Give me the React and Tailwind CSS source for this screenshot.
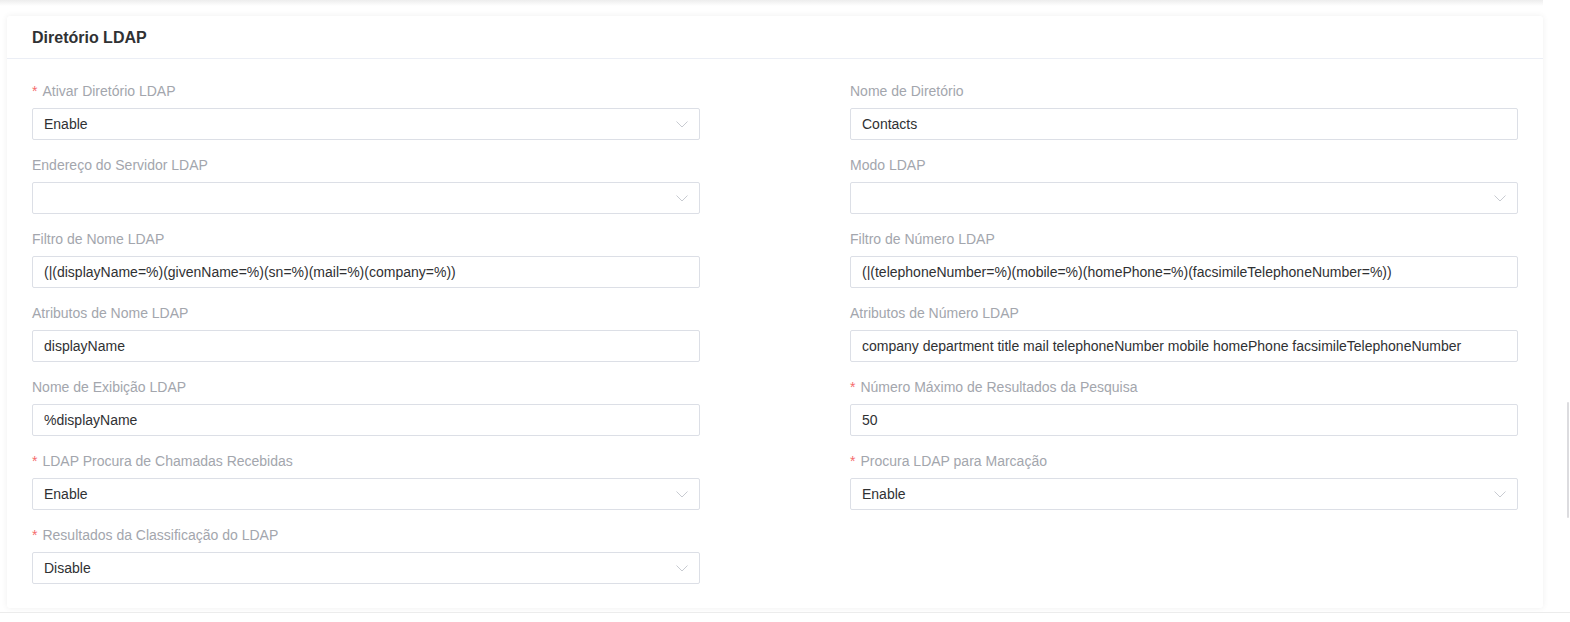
import React from "react";

const Chevron = () => (
  <svg width="12" height="7" viewBox="0 0 12 7" fill="none" className="shrink-0">
    <path d="M0.5 0.5 L6 6 L11.5 0.5" stroke="#c8cbd1" strokeWidth="1" />
  </svg>
);

const Field = ({ label, required, value, select }) => (
  <div className="flex flex-col">
    <div className="h-[20px] leading-[20px] text-[14px] text-[#a3a6ad] flex items-center">
      {required && <span className="text-[#f56c6c] mr-[5px] text-[14px]">*</span>}
      <span>{label}</span>
    </div>
    <div className="mt-[7px] h-[32px] border border-[#dcdfe6] rounded-[2px] bg-white flex items-center pl-[11px] pr-[11px]">
      <span className="flex-1 text-[14px] text-[#303133] whitespace-nowrap overflow-hidden">{value}</span>
      {select && <Chevron />}
    </div>
  </div>
);

export default function App() {
  const left = [
    { label: "Ativar Diretório LDAP", required: true, value: "Enable", select: true },
    { label: "Endereço do Servidor LDAP", value: "", select: true },
    { label: "Filtro de Nome LDAP", value: "(|(displayName=%)(givenName=%)(sn=%)(mail=%)(company=%))" },
    { label: "Atributos de Nome LDAP", value: "displayName" },
    { label: "Nome de Exibição LDAP", value: "%displayName" },
    { label: "LDAP Procura de Chamadas Recebidas", required: true, value: "Enable", select: true },
    { label: "Resultados da Classificação do LDAP", required: true, value: "Disable", select: true },
  ];
  const right = [
    { label: "Nome de Diretório", value: "Contacts" },
    { label: "Modo LDAP", value: "", select: true },
    { label: "Filtro de Número LDAP", value: "(|(telephoneNumber=%)(mobile=%)(homePhone=%)(facsimileTelephoneNumber=%))" },
    { label: "Atributos de Número LDAP", value: "company department title mail telephoneNumber mobile homePhone facsimileTelephoneNumber" },
    { label: "Número Máximo de Resultados da Pesquisa", required: true, value: "50" },
    { label: "Procura LDAP para Marcação", required: true, value: "Enable", select: true },
  ];
  const items = [];
  for (let i = 0; i < 7; i++) {
    items.push(<Field key={"l" + i} {...left[i]} />);
    items.push(right[i] ? <Field key={"r" + i} {...right[i]} /> : <div key={"r" + i} />);
  }
  return (
    <div
      className="relative w-[1570px] h-[622px] bg-white overflow-hidden"
      style={{ fontFamily: '"Liberation Sans", Arial, sans-serif' }}
    >
      <div className="w-[1543px] h-[6px] bg-gradient-to-b from-[#ededed] to-white" />
      <div className="ml-[7px] mt-[10px] w-[1536px] h-[592px] bg-white rounded-[3px] shadow-[0_0_6px_rgba(0,0,0,0.07)] flex flex-col">
        <div className="h-[43px] flex items-center px-[25px] pt-[1px] border-b border-[#ebeef5]">
          <span className="text-[16px] font-bold text-[#303133]">Diretório LDAP</span>
        </div>
        <div className="grid grid-cols-2 gap-x-[150px] gap-y-[15px] px-[25px] pt-[22px]">
          {items}
        </div>
      </div>
      <div className="mt-[4px] h-px w-full bg-[#ececec]" />
      <div className="absolute left-[1567px] top-[402px] w-[2px] h-[116px] bg-[#dcdcdf] rounded-full" />
    </div>
  );
}
